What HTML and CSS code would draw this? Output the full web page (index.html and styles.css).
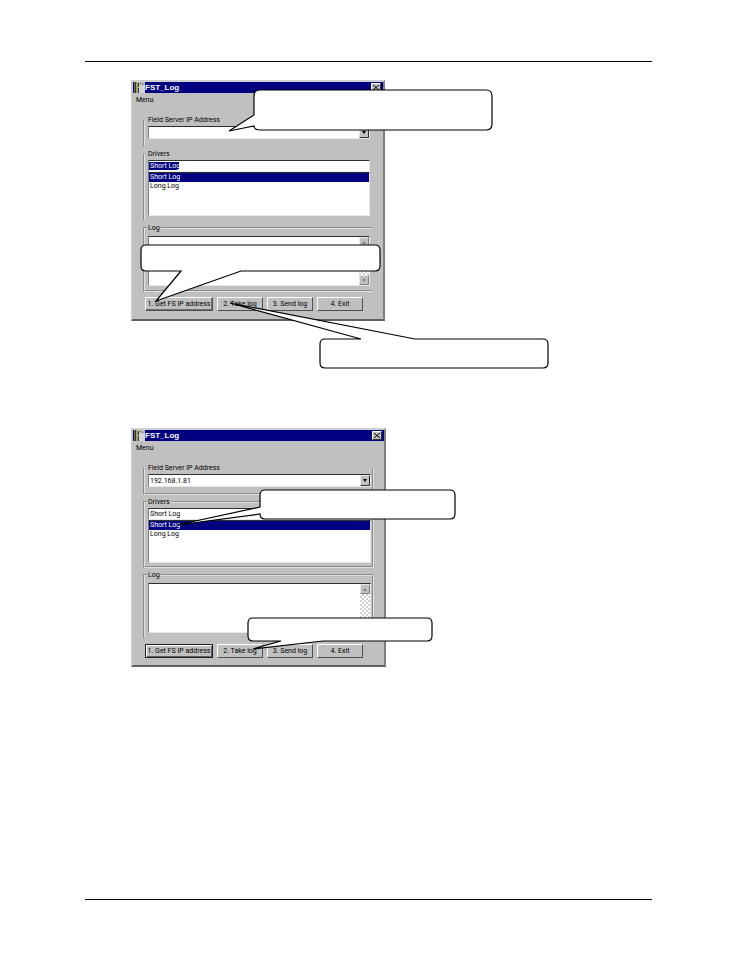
FILE: index.html
```
<!DOCTYPE html>
<html lang="en">
<head>
    <meta charset="UTF-8">
    <meta name="viewport" content="width=device-width, initial-scale=1.0">
    <title>FST_Log</title>
    <link rel="stylesheet" href="styles.css">
</head>
<body>
    <header class="page-header"></header>

    <main class="page-content">
        <!-- Step 1: get the address -->
        <section class="figure">
            <div class="window">
                <div class="title-bar">
                    <svg class="app-icon" width="11" height="11" viewBox="0 0 11 11">
                        <rect width="11" height="11" fill="#b8b8b0"/>
                        <path d="M0 0h1v11H0z" fill="#77773c"/>
                        <path d="M1 0h1v11H1z" fill="#333"/>
                        <path d="M2 0h2v11H2z" fill="#a0a070"/>
                        <path d="M4 1h1v4H4zM4 6h1v5H4z" fill="#333"/>
                        <path d="M5 3h6v8H5z" fill="#d4d4d4"/>
                        <path d="M6 1h1v1H6zM8 2h1v1H8z" fill="#666"/>
                    </svg>
                    <h2>FST_Log</h2>
                    <button type="button" class="close-btn" aria-label="Close">
                        <svg width="6" height="5" viewBox="0 0 6 5"><path d="M0 0l6 5M6 0L0 5" stroke="#000"/></svg>
                    </button>
                </div>
                <nav class="menu-bar"><a href="#">Menu</a></nav>

                <form class="window-body">
                    <fieldset class="group address no-top no-right no-bottom">
                        <legend><label for="ip1">Field Server IP Address</label></legend>
                        <div class="combo">
                            <select id="ip1"><option></option></select>
                            <span class="combo-arrow"></span>
                        </div>
                    </fieldset>

                    <fieldset class="group drivers no-top no-right no-bottom">
                        <legend><label for="driver1">Drivers</label></legend>
                        <input type="text" id="driver1" class="driver-name highlighted" value="Short Log">
                        <select class="driver-list" size="5" aria-label="Driver list">
                            <option selected>Short Log</option>
                            <option>Long Log</option>
                        </select>
                    </fieldset>

                    <fieldset class="group log no-right">
                        <legend><label for="log1">Log</label></legend>
                        <div class="log-box">
                            <textarea id="log1"></textarea>
                            <div class="scrollbar">
                                <button type="button" aria-label="Scroll up"><i class="up"></i></button>
                                <button type="button" aria-label="Scroll down"><i class="down"></i></button>
                            </div>
                        </div>
                    </fieldset>

                    <div class="actions">
                        <button type="button" class="btn btn-wide">1. Get FS IP address</button>
                        <button type="button" class="btn">2. Take log</button>
                        <button type="button" class="btn">3. Send log</button>
                        <button type="button" class="btn">4. Exit</button>
                    </div>
                </form>
            </div>

            <svg class="callouts" width="420" height="290" viewBox="0 0 420 290">
                <path d="M129 10H355Q361 10 361 16V44Q361 50 355 50H129Q123 50 123 46L98 51L123 35V16Q123 10 129 10Z"/>
                <path d="M15 165H244Q249 165 249 170V186Q249 191 244 191H110L25 221L50 191H15Q10 191 10 186V170Q10 165 15 165Z"/>
                <path d="M194 259H230L99 223L284 259H412Q417 259 417 264V283Q417 288 412 288H194Q189 288 189 283V264Q189 259 194 259Z"/>
            </svg>
        </section>

        <!-- Step 2: pick a driver and take the log -->
        <section class="figure">
            <div class="window second">
                <div class="title-bar">
                    <svg class="app-icon" width="11" height="11" viewBox="0 0 11 11">
                        <rect width="11" height="11" fill="#b8b8b0"/>
                        <path d="M0 0h1v11H0z" fill="#77773c"/>
                        <path d="M1 0h1v11H1z" fill="#333"/>
                        <path d="M2 0h2v11H2z" fill="#a0a070"/>
                        <path d="M4 1h1v4H4zM4 6h1v5H4z" fill="#333"/>
                        <path d="M5 3h6v8H5z" fill="#d4d4d4"/>
                        <path d="M6 1h1v1H6zM8 2h1v1H8z" fill="#666"/>
                    </svg>
                    <h2>FST_Log</h2>
                    <button type="button" class="close-btn" aria-label="Close">
                        <svg width="6" height="5" viewBox="0 0 6 5"><path d="M0 0l6 5M6 0L0 5" stroke="#000"/></svg>
                    </button>
                </div>
                <nav class="menu-bar"><a href="#">Menu</a></nav>

                <form class="window-body">
                    <fieldset class="group address no-top">
                        <legend><label for="ip2">Field Server IP Address</label></legend>
                        <div class="combo">
                            <select id="ip2"><option>192.168.1.81</option></select>
                            <span class="combo-arrow"></span>
                        </div>
                    </fieldset>

                    <fieldset class="group drivers">
                        <legend><label for="driver2">Drivers</label></legend>
                        <input type="text" id="driver2" class="driver-name" value="Short Log">
                        <select class="driver-list" size="5" aria-label="Driver list">
                            <option selected>Short Log</option>
                            <option>Long Log</option>
                        </select>
                    </fieldset>

                    <fieldset class="group log no-bottom">
                        <legend><label for="log2">Log</label></legend>
                        <div class="log-box">
                            <textarea id="log2"></textarea>
                            <div class="scrollbar">
                                <button type="button" aria-label="Scroll up"><i class="up"></i></button>
                                <button type="button" aria-label="Scroll down"><i class="down"></i></button>
                            </div>
                        </div>
                    </fieldset>

                    <div class="actions">
                        <button type="button" class="btn btn-wide btn-default">1. Get FS IP address</button>
                        <button type="button" class="btn">2. Take log</button>
                        <button type="button" class="btn">3. Send log</button>
                        <button type="button" class="btn">4. Exit</button>
                    </div>
                </form>
            </div>

            <svg class="callouts" width="330" height="240" viewBox="0 0 330 240">
                <path d="M134 62H319Q324 62 324 67V86Q324 91 319 91H134Q129 91 129 86L46 97L129 79V67Q129 62 134 62Z"/>
                <path d="M122 190H296Q301 190 301 195V208Q301 213 296 213H192L122 221L150 213H122Q117 213 117 208V195Q117 190 122 190Z"/>
            </svg>
        </section>
    </main>

    <footer class="page-footer"></footer>
</body>
</html>
```

FILE: styles.css
```
:root {
    --face: #c0c0c0;
    --light: #e8e8e8;
    --shadow: #808080;
    --dark: #303030;
    --navy: #000080;
    --ui-font: Roboto, "Liberation Sans", sans-serif;
}

* {
    box-sizing: border-box;
}

body {
    margin: 0;
    padding: 0 85px;
    min-height: 100vh;
    display: flex;
    flex-direction: column;
    background-color: #fff;
    color: #000;
    font-family: var(--ui-font);
    font-size: 7px;
    line-height: 8px;
}

.page-header {
    height: 62px;
    border-bottom: 1px solid #000;
}

.page-footer {
    height: 55px;
    border-top: 1px solid #000;
}

.page-content {
    flex: 1;
    display: flex;
    flex-direction: column;
    align-items: flex-start;
    gap: 107px;
    padding: 18px 46px;
}

.figure {
    position: relative;
}

/* Window */
.window {
    width: 254px;
    background-color: var(--face);
    border: 2px solid;
    border-color: #d0d0d0 var(--shadow) #606060 #c8c8c8;
}

.window.second {
    width: 255px;
}

.title-bar {
    display: flex;
    align-items: center;
    height: 11px;
    padding: 0 2px 0 1px;
    background-color: var(--navy);
    color: #fff;
}

.title-bar h2 {
    flex: 1;
    margin: 0;
    font-family: "Liberation Sans", sans-serif;
    font-size: 8px;
    font-weight: bold;
}

.close-btn {
    display: flex;
    align-items: center;
    justify-content: center;
    width: 10px;
    height: 9px;
    padding: 0;
    background-color: var(--face);
    border: 1px solid;
    border-color: #fff var(--dark) var(--dark) #fff;
}

.menu-bar {
    height: 13px;
    padding: 3px;
}

.menu-bar a {
    color: #000;
    text-decoration: none;
}

.window-body {
    padding: 10px 10px 8px;
}

.second .window-body {
    padding-bottom: 7px;
}

/* Group boxes */
.group {
    min-width: 0;
    margin: 0 0 3px;
    padding: 2px 1px 4px 3px;
    border: 2px groove #e0e0e0;
}

.group legend {
    margin-left: -1px;
    padding: 0 1px;
    height: 8px;
}

.group.address {
    padding-bottom: 6px;
}

.group.drivers {
    padding-bottom: 3px;
}

.group.log {
    margin-bottom: 5px;
    padding-top: 4px;
}

.group.no-top {
    border-top-color: transparent;
}

.group.no-right {
    border-right-color: transparent;
}

.group.no-bottom {
    border-bottom-color: transparent;
}

input,
select,
textarea,
button {
    font: inherit;
    color: #000;
    border-radius: 0;
    outline: none;
}

.combo,
.driver-name,
.driver-list,
.log-box {
    width: 100%;
    background-color: #fff;
    border: 1px solid;
    border-color: var(--dark) var(--light) var(--light) var(--shadow);
}

.combo {
    display: flex;
    height: 13px;
}

.combo select {
    flex: 1;
    min-width: 0;
    padding: 0 1px;
    border: none;
    background: none;
    appearance: none;
}

.combo-arrow {
    display: flex;
    align-items: center;
    justify-content: center;
    width: 10px;
    background-color: var(--face);
    border: 1px solid;
    border-color: var(--light) var(--dark) var(--dark) var(--light);
}

.combo-arrow::before {
    content: "";
    border: 2px solid transparent;
    border-top: 3px solid #000;
    border-bottom: none;
}

.driver-name {
    display: block;
    height: 12px;
    padding: 0 1px;
}

.driver-name.highlighted {
    color: #fff;
    background: linear-gradient(var(--navy), var(--navy)) 0 1px / 30px 8px no-repeat #fff;
}

.driver-list {
    display: block;
    height: 44px;
    padding: 0;
    overflow: hidden;
    scrollbar-width: none;
}

.second .driver-list {
    height: 43px;
}

.driver-list option {
    min-height: 9px;
    height: 9px;
    padding: 0 1px;
    line-height: 9px;
}

.driver-list option:checked {
    background: linear-gradient(var(--navy), var(--navy));
    -webkit-text-fill-color: #fff;
}

.log-box {
    display: flex;
    height: 50px;
}

.log-box textarea {
    flex: 1;
    min-width: 0;
    padding: 1px;
    border: none;
    resize: none;
}

.scrollbar {
    display: flex;
    flex-direction: column;
    justify-content: space-between;
    width: 10px;
    background: repeating-conic-gradient(#fff 0 25%, #d0d0d0 0 50%) 0 0 / 4px 4px;
}

.scrollbar button {
    display: flex;
    align-items: center;
    justify-content: center;
    height: 10px;
    padding: 0;
    background-color: var(--face);
    border: 1px solid;
    border-color: var(--light) var(--shadow) var(--shadow) var(--light);
}

.up,
.down {
    border: 2px solid transparent;
}

.up {
    border-top: none;
    border-bottom: 3px solid var(--shadow);
}

.down {
    border-bottom: none;
    border-top: 3px solid var(--shadow);
}

/* Buttons */
.actions {
    display: flex;
    gap: 4px;
    padding-left: 2px;
}

.btn {
    width: 46px;
    height: 14px;
    padding: 0;
    background-color: var(--face);
    border: 1px solid;
    border-color: #fff #505050 #505050 #fff;
    white-space: nowrap;
}

.btn-wide {
    width: 68px;
    box-shadow: inset -1px -1px 0 #707070;
}

.btn-default {
    border-color: #202020;
    box-shadow: inset 1px 1px 0 #fff, inset -1px -1px 0 #606060;
}

/* Callout balloons laid over the windows */
.callouts {
    position: absolute;
    top: 0;
    left: 0;
    overflow: visible;
    pointer-events: none;
}

.callouts path {
    fill: #fff;
    stroke: #000;
    stroke-width: 1.2;
}
```
